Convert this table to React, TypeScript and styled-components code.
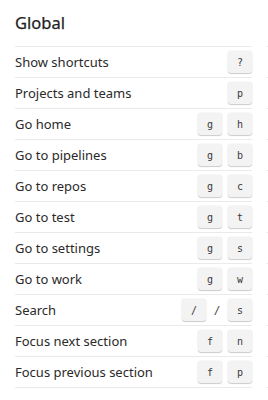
import React from "react";
import styled, { createGlobalStyle } from "styled-components";

const Global = createGlobalStyle`
  html, body { margin: 0; padding: 0; background: #fff; overflow: hidden; }
  body { font-family: "Segoe UI", "Noto Sans", "Open Sans", sans-serif; color: #201f1e; }
`;

const Page = styled.div`
  width: 268px;
  height: 400px;
  overflow: hidden;
  padding: 0 0 0 15px;
  box-sizing: border-box;
`;

const Columns = styled.div`
  display: grid;
  grid-template-columns: 237px 237px;
  column-gap: 15px;
`;

const Section = styled.section`
  display: flex;
  flex-direction: column;
`;

const Title = styled.h2`
  margin: 0;
  height: 46px;
  box-sizing: border-box;
  padding-top: 11px;
  font-size: 16.5px;
  font-weight: 400;
  -webkit-text-stroke: 0.25px #1e1e1e;
  line-height: 24px;
  color: #1e1e1e;
`;

const Row = styled.div`
  display: flex;
  align-items: center;
  justify-content: space-between;
  height: 31px;
  border-top: 1px solid #eaeaea;
  box-sizing: border-box;
  &:last-child { border-bottom: 1px solid #eaeaea; height: 32px; }
`;

const Label = styled.span`
  font-size: 13px;
  color: #2a2a2a;
`;

const Keys = styled.div`
  display: flex;
  align-items: center;
  gap: 6px;
`;

const Key = styled.kbd`
  display: flex;
  align-items: center;
  justify-content: center;
  width: 24px;
  height: 22px;
  box-sizing: border-box;
  border-radius: 3px;
  background: #f3f3f3;
  box-shadow: 0 1px 1px rgba(0, 0, 0, 0.18), 0 0 0 0.5px rgba(0, 0, 0, 0.06);
  font-family: "DejaVu Sans Mono", "Liberation Mono", monospace;
  font-size: 10px;
  color: #3a3a3a;
`;

const Sep = styled.span`
  width: 10px;
  text-align: center;
  font-family: "DejaVu Sans Mono", monospace;
  font-size: 11px;
  color: #444;
`;

type Item = { label: string; keys: string[]; alt?: boolean };

const items: Item[] = [
  { label: "Show shortcuts", keys: ["?"] },
  { label: "Projects and teams", keys: ["p"] },
  { label: "Go home", keys: ["g", "h"] },
  { label: "Go to pipelines", keys: ["g", "b"] },
  { label: "Go to repos", keys: ["g", "c"] },
  { label: "Go to test", keys: ["g", "t"] },
  { label: "Go to settings", keys: ["g", "s"] },
  { label: "Go to work", keys: ["g", "w"] },
  { label: "Search", keys: ["/", "s"], alt: true },
  { label: "Focus next section", keys: ["f", "n"] },
  { label: "Focus previous section", keys: ["f", "p"] },
];

export default function App() {
  return (
    <Page>
      <Global />
      <Columns>
        <Section>
          <Title>Global</Title>
          {items.map((it) => (
            <Row key={it.label}>
              <Label>{it.label}</Label>
              <Keys>
                {it.alt ? (
                  <>
                    <Key>{it.keys[0]}</Key>
                    <Sep>/</Sep>
                    <Key>{it.keys[1]}</Key>
                  </>
                ) : (
                  it.keys.map((k, i) => <Key key={i}>{k}</Key>)
                )}
              </Keys>
            </Row>
          ))}
        </Section>
        <Section>
          <Title>&nbsp;</Title>
          {items.map((it) => (
            <Row key={it.label} />
          ))}
        </Section>
      </Columns>
    </Page>
  );
}
